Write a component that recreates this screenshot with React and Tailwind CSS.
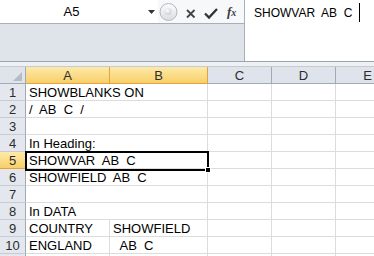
import React from "react";

const colHeads = [
  { label: "A", sel: true },
  { label: "B", sel: true },
  { label: "C", sel: false },
  { label: "D", sel: false },
  { label: "E", sel: false },
];

const rows = [
  { n: 1, a: "SHOWBLANKS ON", merged: true },
  { n: 2, a: "/  AB  C  /", merged: true },
  { n: 3, a: "", merged: true },
  { n: 4, a: "In Heading:", merged: true },
  { n: 5, a: "SHOWVAR  AB  C", merged: true, sel: true },
  { n: 6, a: "SHOWFIELD  AB  C", merged: true },
  { n: 7, a: "", merged: true },
  { n: 8, a: "In DATA", merged: true },
  { n: 9, a: "COUNTRY", b: "SHOWFIELD" },
  { n: 10, a: "ENGLAND", b: "  AB  C" },
  // row 11 only peeks in at the bottom edge, number hidden
  { n: "", a: "", b: "" },
];

const cell =
  "h-[17px] border-b border-r border-[#dadcdd] pl-[3px] text-[13px] leading-[17px] whitespace-pre overflow-visible";

const App = () => {
  return (
    <div className="w-[374px] h-[256px] overflow-hidden bg-white font-['Liberation_Sans',Arial,sans-serif] text-black">
      {/* name box + formula bar */}
      <div className="flex h-[61px]">
        <div className="flex w-[245px] flex-col border-r border-[#a9afb8]">
          <div className="flex h-[24px] items-center border-b border-[#a9afb8] bg-[#f7f8fa]">
            <div className="flex h-full w-[158px] items-center bg-white">
              <span className="w-[143px] text-center text-[13px] leading-[17px]">A5</span>
              <svg width="7" height="4" className="ml-[5px]">
                <path d="M0 0 H7 L3.5 4 Z" fill="#333" />
              </svg>
            </div>
            <svg width="62" height="23" viewBox="0 0 62 23">
              <defs>
                <linearGradient id="knob" x1="0" y1="0" x2="0" y2="1">
                  <stop offset="0" stopColor="#fdfdfd" />
                  <stop offset="1" stopColor="#d9dce0" />
                </linearGradient>
                <radialGradient id="dot" cx="0.4" cy="0.35" r="0.7">
                  <stop offset="0" stopColor="#ffffff" />
                  <stop offset="1" stopColor="#c9ccd1" />
                </radialGradient>
              </defs>
              <circle cx="10.5" cy="12" r="8.5" fill="url(#knob)" stroke="#b3b8bf" />
              <circle cx="10" cy="11.5" r="3.5" fill="url(#dot)" />
              <path d="M29 10 L36.5 17.5 M36.5 10 L29 17.5" stroke="#444" strokeWidth="1.8" />
              <path d="M47 13.5 L51 17.5 L59 9" stroke="#333" strokeWidth="2.3" fill="none" />
            </svg>
            <span className="ml-[7px] font-['Liberation_Serif',serif] text-[13px] italic font-bold leading-[17px] text-[#3c3c3c]">
              f<span className="text-[10px]">x</span>
            </span>
          </div>
          <div className="flex-1 bg-[#dfe3ea]" />
        </div>
        <div className="flex flex-1 items-start bg-white pl-[9px]">
          <span className="mt-[5px] whitespace-pre text-[12px] leading-[17px]">SHOWVAR  AB  C</span>
          <span className="ml-[7px] mt-[3px] h-[19px] w-px bg-black" />
        </div>
      </div>
      <div className="h-px bg-[#9ca4ae]" />
      <div className="h-[4px] bg-[#eef0f4]" />
      <div className="h-px bg-[#c6cbd2]" />

      {/* sheet grid */}
      <div className="relative grid grid-cols-[26px_84px_98px_64px_64px_64px]">
        <div className="relative h-[17px] border-b border-r border-[#9eaab8] bg-[#dfe3ea]">
          <svg width="9" height="9" className="absolute right-[3px] bottom-[2px]">
            <path d="M9 0 V9 H0 Z" fill="#b6bcc4" />
          </svg>
        </div>
        {colHeads.map((c) => (
          <div
            key={c.label}
            className={
              c.sel
                ? "h-[17px] border-b border-r border-[#e2a23f] bg-gradient-to-b from-[#fdeaa8] to-[#f8cf68] text-center text-[13px] leading-[18px] text-[#2c2c2c]"
                : "h-[17px] border-b border-r border-[#9eaab8] bg-[#dfe3ec] text-center text-[13px] leading-[18px] text-[#2c2c2c]"
            }
          >
            {c.label}
          </div>
        ))}

        {rows.map((r, i) => (
          <React.Fragment key={i}>
            <div
              className={
                r.sel
                  ? "h-[17px] border-b border-r border-[#e2a23f] bg-gradient-to-b from-[#fdeaa8] to-[#f8cf68] text-center text-[13px] leading-[17px] text-[#2c2c2c]"
                  : "h-[17px] border-b border-r border-b-[#c6ccd5] border-r-[#9eaab8] bg-[#e4e8ee] text-center text-[13px] leading-[17px] text-[#2c2c2c]"
              }
            >
              {r.n}
            </div>
            {r.merged ? (
              <div className={`${cell} col-span-2`}>{r.a}</div>
            ) : (
              <>
                <div className={cell}>{r.a}</div>
                <div className={cell}>{r.b}</div>
              </>
            )}
            <div className={cell} />
            <div className={cell} />
            <div className={cell} />
          </React.Fragment>
        ))}

        {/* active cell selection A5:B5 */}
        <div className="pointer-events-none absolute left-[25px] top-[84px] h-[20px] w-[184px] border-2 border-black">
          <div className="absolute right-[-4px] bottom-[-4px] h-[6px] w-[6px] border border-white bg-black" />
        </div>
      </div>
    </div>
  );
};

export default App;
